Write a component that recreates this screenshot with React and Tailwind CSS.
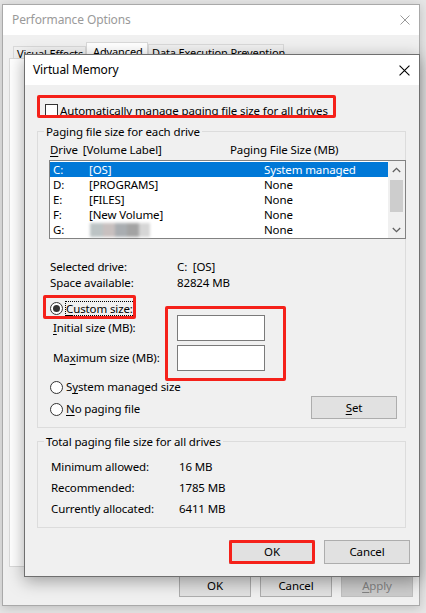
import React from "react";

function U({ children }) {
  return <span className="underline underline-offset-[2px]">{children}</span>;
}

function XIcon({ className }) {
  return (
    <svg viewBox="0 0 10 10" className={className} fill="none">
      <path d="M0.5 0.5L9.5 9.5M9.5 0.5L0.5 9.5" stroke="currentColor" strokeWidth="1" />
    </svg>
  );
}

function Chevron({ down }) {
  return (
    <svg width="9" height="6" viewBox="0 0 9 6" fill="none" className={down ? "rotate-180" : ""}>
      <path d="M0.8 5L4.5 1.3L8.2 5" stroke="#606060" strokeWidth="1.3" />
    </svg>
  );
}

function Radio({ checked }) {
  return (
    <span className="flex h-[13px] w-[13px] shrink-0 items-center justify-center rounded-full border border-[#333] bg-white">
      {checked && <span className="h-[7px] w-[7px] rounded-full bg-[#333]" />}
    </span>
  );
}

function RedBox({ className }) {
  return (
    <span
      className={
        "pointer-events-none absolute rounded-[2px] border-[3px] border-[#f5211a] " + className
      }
    />
  );
}

function Legend({ children }) {
  return (
    <span className="absolute left-[6px] top-[-8px] bg-[#f0f0f0] px-[2px] leading-[15px]">
      {children}
    </span>
  );
}

const drives = [
  { letter: "C:", label: "[OS]", size: "System managed" },
  { letter: "D:", label: "[PROGRAMS]", size: "None" },
  { letter: "E:", label: "[FILES]", size: "None" },
  { letter: "F:", label: "[New Volume]", size: "None" },
  { letter: "G:", label: null, size: "None" },
];

function OuterWindow() {
  return (
    <div className="absolute left-[2px] top-[4px] flex h-[602px] w-[418px] flex-col border border-[#a9a9a9] bg-[#f0f0f0] shadow-[0_2px_10px_rgba(0,0,0,0.18)]">
      <div className="flex h-[30px] items-center justify-between bg-white pl-[9px] pr-[9px] text-[12px] text-[#9a9a9a]">
        <span>Performance Options</span>
        <XIcon className="h-[10px] w-[10px]" />
      </div>
      <div className="ml-[10px] mt-[7px] flex h-[16px] items-end text-[11px]">
        <div className="h-[12px] w-[73px] border border-b-0 border-[#d9d9d9] pl-[3px] leading-[14px]">
          Visual Effects
        </div>
        <div className="h-[16px] w-[62px] border border-b-0 border-[#d9d9d9] bg-white px-[6px] pt-[1px] leading-[15px]">
          Advanced
        </div>
        <div className="h-[14px] w-[136px] border border-b-0 border-[#d9d9d9] pl-[3px] leading-[15px]">
          Data Execution Prevention
        </div>
      </div>
      <div className="ml-[6px] mr-[8px] h-[509px] border border-[#d9d9d9] bg-white" />
      <div className="mt-[7px] flex justify-end gap-[9px] pr-[6px]">
        <div className="flex h-[23px] w-[72px] items-center justify-center border border-[#adadad] bg-[#e1e1e1]">
          OK
        </div>
        <div className="flex h-[23px] w-[72px] items-center justify-center border border-[#adadad] bg-[#e1e1e1]">
          Cancel
        </div>
        <div className="flex h-[23px] w-[72px] items-center justify-center border border-[#bfbfbf] bg-[#cccccc] text-[#838383]">
          <U>A</U>pply
        </div>
      </div>
    </div>
  );
}

function DriveList() {
  return (
    <div className="ml-[11px] mt-[3px] flex h-[79px] w-[357px] border border-[#828282] bg-white">
      <div className="w-[338px] pt-[1px]">
        {drives.map((d, i) => (
          <div
            key={d.letter}
            className={
              "flex h-[15px] items-center pl-[3px] leading-[15px] " +
              (i === 0 ? "bg-[#0078d7] text-white" : "")
            }
          >
            <span className="w-[36px]">{d.letter}</span>
            <span className="w-[175px]">
              {d.label ? (
                d.label
              ) : (
                <span className="flex h-[14px] pl-[1px] blur-[1.5px]">
                  <span className="w-[13px] bg-[#bcc3c4]" />
                  <span className="w-[12px] bg-[#c8c0bf]" />
                  <span className="w-[12px] bg-[#a9adb1]" />
                  <span className="w-[12px] bg-[#a3a3a3]" />
                  <span className="w-[11px] bg-[#d6d6d6]" />
                </span>
              )}
            </span>
            <span>{d.size}</span>
          </div>
        ))}
      </div>
      <div className="flex w-[17px] flex-col bg-[#f0f0f0]">
        <div className="flex h-[17px] items-center justify-center">
          <Chevron />
        </div>
        <div className="mx-[2px] mt-[2px] h-[32px] bg-[#cdcdcd]" />
        <div className="mt-auto flex h-[17px] items-center justify-center">
          <Chevron down />
        </div>
      </div>
    </div>
  );
}

function VirtualMemory() {
  return (
    <div className="absolute left-[24px] top-[54px] flex h-[523px] w-[396px] flex-col border border-[#6f6f6f] bg-[#f0f0f0] shadow-[0_4px_16px_rgba(0,0,0,0.35)]">
      <div className="flex h-[30px] shrink-0 items-center justify-between bg-white pl-[8px] pr-[9px] text-[12px]">
        <span>Virtual Memory</span>
        <XIcon className="h-[11px] w-[11px] text-black" />
      </div>

      {/* auto manage checkbox */}
      <div className="relative ml-[20px] mt-[19px] flex h-[13px] items-center">
        <span className="h-[13px] w-[13px] border border-[#333] bg-white" />
        <span className="ml-[2px] leading-[15px]">
          <U>A</U>utomatically manage paging file size for all drives
        </span>
        <RedBox className="left-[-8px] top-[-9px] h-[23px] w-[299px]" />
      </div>

      {/* paging file size for each drive */}
      <div className="relative ml-[12px] mt-[14px] h-[297px] w-[369px] shrink-0 border border-[#dcdcdc]">
        <Legend>Paging file size for each drive</Legend>
        <div className="mt-[10px] flex pl-[12px] leading-[15px]">
          <span className="w-[180px]">
            <U>D</U>rive<span className="ml-[5px]">[Volume Label]</span>
          </span>
          <span>Paging File Size (MB)</span>
        </div>
        <DriveList />

        <div className="mt-[20px] pl-[12px]">
          <div className="flex h-[16px] items-center">
            <span className="w-[127px]">Selected drive:</span>
            <span>C:&nbsp;&nbsp;[OS]</span>
          </div>
          <div className="flex h-[16px] items-center">
            <span className="w-[127px]">Space available:</span>
            <span>82824 MB</span>
          </div>
        </div>

        <div className="mt-[7px] flex">
          <div className="w-[139px] pl-[12px]">
            <div className="relative flex h-[20px] items-center">
              <Radio checked />
              <span className="ml-[2px] h-[15px] border border-dotted border-black pr-[1px] leading-[13px]">
                <U>C</U>ustom size:
              </span>
              <RedBox className="left-[-7px] top-[-3px] h-[24px] w-[93px]" />
            </div>
            <div className="flex h-[20px] items-center pl-[3px]">
              <span>
                <U>I</U>nitial size (MB):
              </span>
            </div>
            <div className="mt-[10px] flex h-[20px] items-center pl-[3px]">
              <span>
                Ma<U>x</U>imum size (MB):
              </span>
            </div>
          </div>
          <div className="relative mt-[17px] flex flex-col gap-[4px]">
            <div className="h-[26px] w-[88px] border border-[#7a7a7a] bg-white" />
            <div className="h-[26px] w-[88px] border border-[#7a7a7a] bg-white" />
            <RedBox className="left-[-12px] top-[-9px] h-[75px] w-[121px]" />
          </div>
        </div>

        <div className="mt-[6px] flex">
          <div className="pl-[12px]">
            <div className="flex h-[20px] items-center">
              <Radio />
              <span className="ml-[3px]">
                S<U>y</U>stem managed size
              </span>
            </div>
            <div className="mt-[2px] flex h-[20px] items-center">
              <Radio />
              <span className="ml-[3px]">
                <U>N</U>o paging file
              </span>
            </div>
          </div>
          <div className="ml-auto mr-[8px] mt-[19px] flex h-[23px] w-[86px] items-center justify-center border border-[#adadad] bg-[#e1e1e1]">
            <span>
              <U>S</U>et
            </span>
          </div>
        </div>
      </div>

      {/* totals */}
      <div className="relative ml-[12px] mt-[13px] h-[87px] w-[369px] shrink-0 border border-[#dcdcdc]">
        <Legend>Total paging file size for all drives</Legend>
        <div className="mt-[14px] pl-[13px]">
          {[
            ["Minimum allowed:", "16 MB"],
            ["Recommended:", "1785 MB"],
            ["Currently allocated:", "6411 MB"],
          ].map(([k, v]) => (
            <div key={k} className="flex h-[21px] items-center">
              <span className="w-[128px]">{k}</span>
              <span>{v}</span>
            </div>
          ))}
        </div>
      </div>

      <div className="mt-[12px] flex justify-end gap-[9px] pr-[9px]">
        <div className="relative flex h-[24px] w-[86px] items-center justify-center border border-[#adadad] bg-[#e1e1e1]">
          OK
          <RedBox className="inset-[-1px]" />
        </div>
        <div className="flex h-[24px] w-[86px] items-center justify-center border border-[#adadad] bg-[#e1e1e1]">
          Cancel
        </div>
      </div>
    </div>
  );
}

export default function App() {
  return (
    <div className="relative h-[613px] w-[426px] overflow-hidden whitespace-nowrap bg-[#e6e6e6] font-['Noto_Sans',sans-serif] text-[11.5px] tracking-[-0.12px] text-black">
      <OuterWindow />
      <VirtualMemory />
    </div>
  );
}
